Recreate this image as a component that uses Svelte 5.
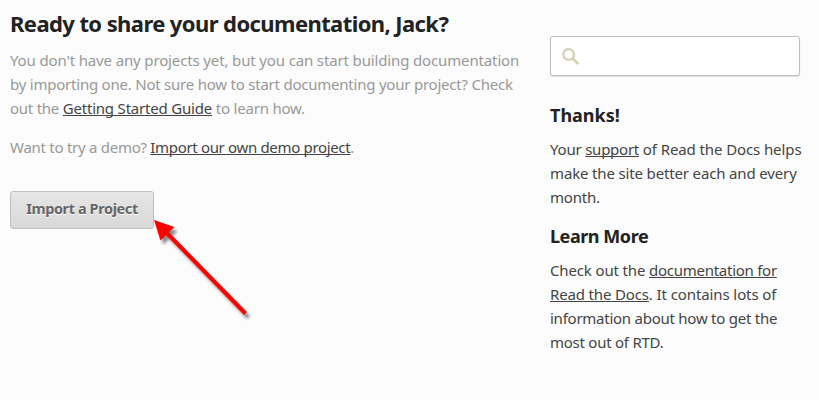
<script>
  const intro = [
    [{ t: "You don't have any projects yet, but you can start building documentation", ls: -0.14 }],
    [{ t: 'by importing one. Not sure how to start documenting your project? Check', ls: -0.225 }],
    [{ t: 'out the ', ls: -0.25 }, { t: 'Getting Started Guide', link: true, ls: -0.2 }, { t: ' to learn how.', ls: -0.2 }],
  ];
  const demo = [
    [{ t: 'Want to try a demo? ', ls: -0.27 }, { t: 'Import our own demo project', link: true, ls: -0.33 }, { t: '.' }],
  ];
  const thanks = [
    [{ t: 'Your ', ls: -0.2 }, { t: 'support', link: true, ls: -0.25 }, { t: ' of Read the Docs helps', ls: -0.1 }],
    [{ t: 'make the site better each and every', ls: -0.15 }],
    [{ t: 'month.', ls: -0.2 }],
  ];
  const learn = [
    [{ t: 'Check out the ', ls: -0.14 }, { t: 'documentation for', link: true, ls: -0.27 }],
    [{ t: 'Read the Docs', link: true, ls: -0.15 }, { t: '. It contains lots of', ls: -0.1 }],
    [{ t: 'information about how to get the', ls: -0.25 }],
    [{ t: 'most out of RTD.', ls: -0.25 }],
  ];
</script>

{#snippet copy(lines)}
  <p>
    {#each lines as line}
      <span class="line">{#each line as s}{#if s.link}<a href="#top" style:letter-spacing="{s.ls ?? 0}px">{s.t}</a>{:else}<span style:letter-spacing="{s.ls ?? 0}px">{s.t}</span>{/if}{/each}</span>
    {/each}
  </p>
{/snippet}

<div class="page">
  <main>
    <h1>Ready to share your documentation, Jack?</h1>
    {@render copy(intro)}
    {@render copy(demo)}
    <button>Import a Project</button>
  </main>
  <aside>
    <label class="search">
      <svg width="20" height="20" viewBox="0 0 20 20" fill="none" stroke="#d3cfb4">
        <circle cx="7.7" cy="7.5" r="5.4" stroke-width="2.2" />
        <path d="M11.6 11.4L17.2 17" stroke-width="2.6" />
      </svg>
      <input type="text" aria-label="Search" />
    </label>
    <h2>Thanks!</h2>
    {@render copy(thanks)}
    <h2 class="tight">Learn More</h2>
    {@render copy(learn)}
  </aside>
  <svg class="arrow" width="110" height="115" viewBox="0 0 110 115">
    <g fill="#ff0000">
      <path d="M4 5L24.5 12L10.5 25.5Z" />
      <path d="M13 14L95.5 98.5" stroke="#ff0000" stroke-width="4" />
    </g>
  </svg>
</div>

<style>
  :global(body) { background: #fcfcfc; }
  .page {
    position: relative;
    box-sizing: border-box;
    width: 819px;
    height: 400px;
    overflow: hidden;
    display: flex;
    padding-left: 10px;
    background: #fcfcfc;
    font: 15px/24px "Noto Sans", sans-serif;
    color: #444;
  }
  main { width: 540px; color: #999; }
  aside { width: 260px; padding-top: 36px; }
  h1, h2 { margin: 0; color: #222; font-weight: 700; white-space: nowrap; }
  h1 { font-size: 22px; line-height: 30px; letter-spacing: -0.59px; padding-top: 8px; margin-bottom: 10px; }
  h2 { font-size: 18px; line-height: 24px; margin-bottom: 10px; }
  .tight { letter-spacing: -0.45px; }
  p { margin: 0 0 15px; }
  .line { display: block; white-space: pre; }
  a {
    color: #444;
    text-decoration: underline;
    text-decoration-thickness: 1px;
    text-underline-offset: 1px;
    text-decoration-skip-ink: none;
  }
  button {
    display: block;
    box-sizing: border-box;
    width: 144px;
    height: 38px;
    margin-top: 32px;
    padding: 0 0 5px;
    border: 1px solid #bfbfbf;
    border-radius: 3px;
    background: linear-gradient(#e6e6e6, #d8d8d8);
    color: #666;
    font: 700 14.5px/20px "Noto Sans", sans-serif;
    letter-spacing: -0.4px;
    text-shadow: 0 1px 0 #fff;
    white-space: nowrap;
  }
  .search {
    display: flex;
    box-sizing: border-box;
    width: 250px;
    height: 40px;
    margin-bottom: 27px;
    padding: 10px 10px 0;
    border: 1px solid #bfbfbf;
    border-radius: 3px;
    background: #fff;
    box-shadow: 0 1px 1px #ddd;
  }
  input { flex: 1; min-width: 0; height: 20px; padding: 0; border: 0; outline: 0; background: none; }
  .arrow {
    position: absolute;
    left: 150px;
    top: 215px;
    filter: drop-shadow(3px 4px 1.5px rgba(0, 0, 0, 0.45));
  }
</style>
